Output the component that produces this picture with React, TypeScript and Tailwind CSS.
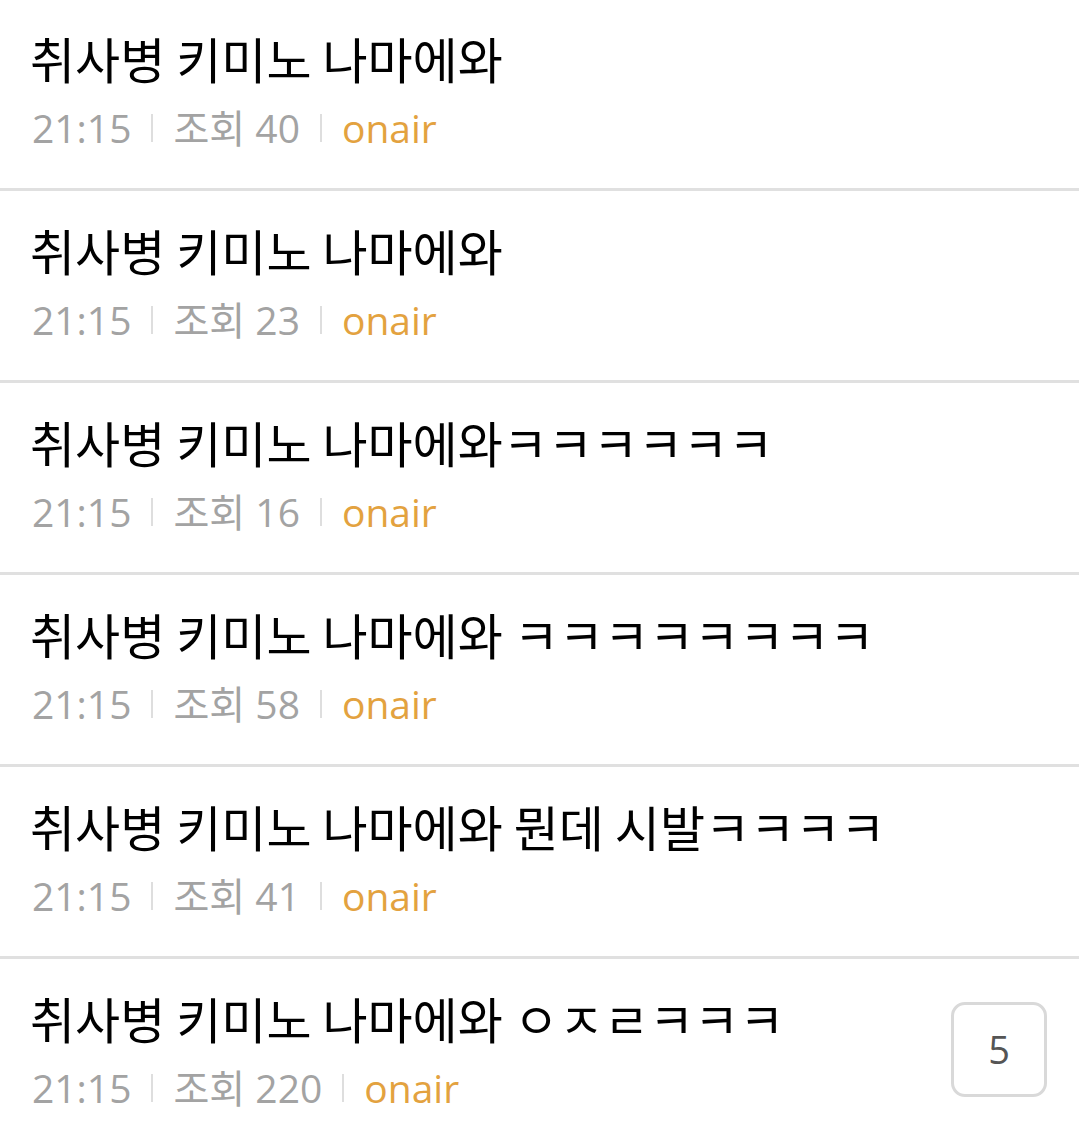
import React from 'react';

type Post = { title: string; views: number; comments?: number };

const posts: Post[] = [
    { title: '취사병 키미노 나마에와', views: 40 },
    { title: '취사병 키미노 나마에와', views: 23 },
    { title: '취사병 키미노 나마에와ㅋㅋㅋㅋㅋㅋ', views: 16 },
    { title: '취사병 키미노 나마에와 ㅋㅋㅋㅋㅋㅋㅋㅋ', views: 58 },
    { title: '취사병 키미노 나마에와 뭔데 시발ㅋㅋㅋㅋ', views: 41 },
    { title: '취사병 키미노 나마에와 ㅇㅈㄹㅋㅋㅋ', views: 220, comments: 5 },
];

const Sep: React.FC = () => <span className="mx-[20px] inline-block h-[28px] w-[2px] bg-[#dedede]" />;

const App: React.FC = () => {
    return (
        <div className="-mt-[1px] min-h-screen bg-white" style={{ fontFamily: '"Open Sans", "Noto Sans CJK KR", sans-serif' }}>
            {posts.map((p, i) => (
                <div key={i} className="flex items-center border-b-[3px] border-[#e0e0e0] pl-[30px] pr-[32px]">
                    <div className="flex-1 pt-[29px] pb-[30px]">
                        <div className="h-[60px] text-[49px] leading-[60px] text-black" style={{ fontFamily: '"Noto Sans CJK KR", sans-serif' }}>
                            {p.title}
                        </div>
                        <div className="mt-[10px] flex h-[60px] items-center pl-[2px] text-[39px] text-[#a3a3a3]">
                            <span>21:15</span>
                            <Sep />
                            <span>조회 {p.views}</span>
                            <Sep />
                            <span className="text-[#e3a23f]">onair</span>
                        </div>
                    </div>
                    {p.comments !== undefined && (
                        <div className="mb-[8px] flex h-[95px] w-[96px] items-center justify-center rounded-[14px] border-[3px] border-[#d9d9d9] text-[38px] text-[#555555]">
                            {p.comments}
                        </div>
                    )}
                </div>
            ))}
        </div>
    );
};

export default App;
